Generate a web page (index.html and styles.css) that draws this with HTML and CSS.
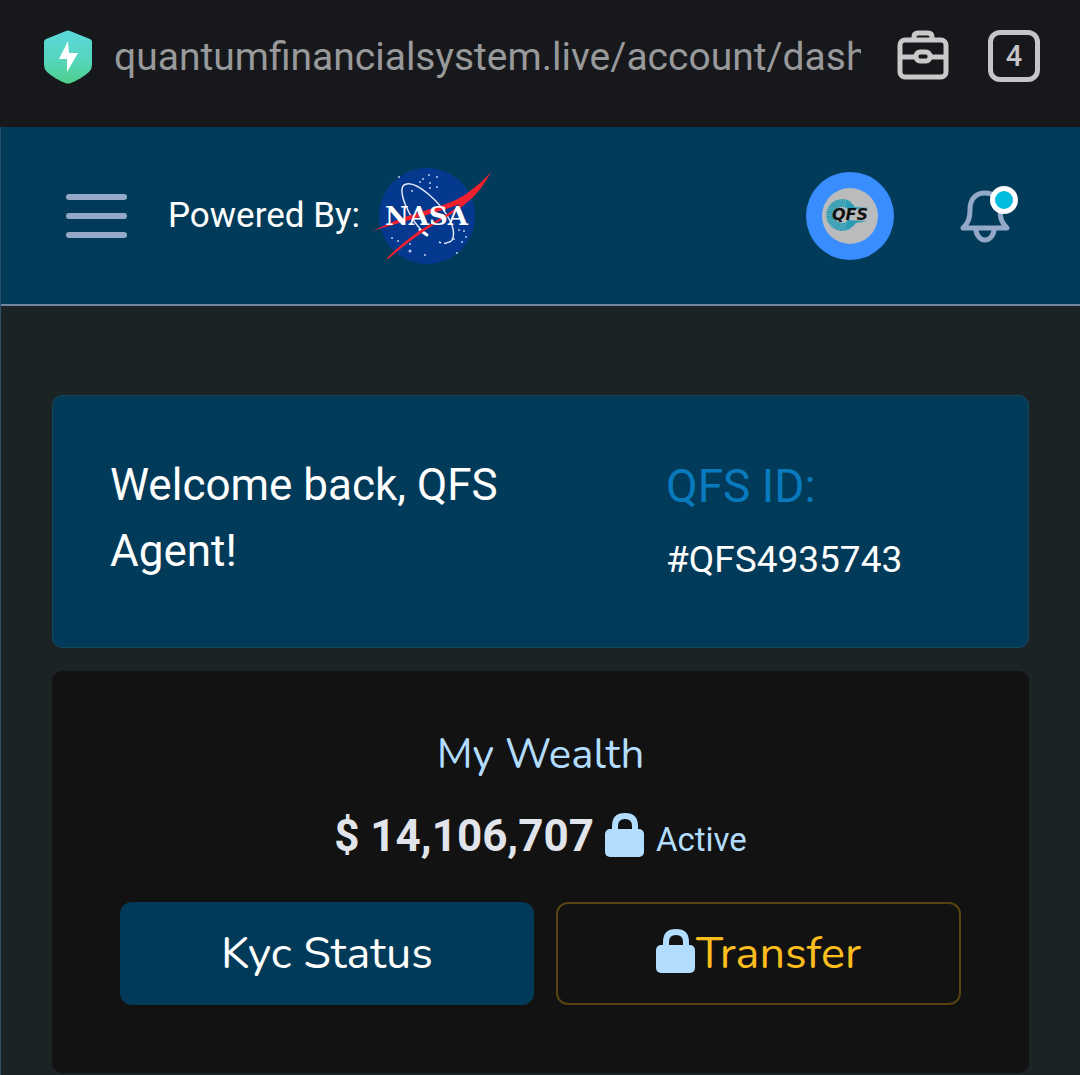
FILE: index.html
```html
<!DOCTYPE html>
<html lang="en">
  <head>
    <meta charset="UTF-8">
    <meta name="viewport" content="width=device-width, initial-scale=1">
    <title>Dashboard</title>
    <link rel="stylesheet" href="styles.css">
  </head>
  <body>
    <div class="browser-bar">
      <svg class="shield" viewBox="0 0 48 54" aria-hidden="true">
        <defs>
          <linearGradient id="shieldFill" x1="0" y1="0" x2="0" y2="1">
            <stop offset="0" stop-color="#5bd8dc"/>
            <stop offset="0.55" stop-color="#55d5bd"/>
            <stop offset="1" stop-color="#4fd08b"/>
          </linearGradient>
        </defs>
        <path fill="url(#shieldFill)" d="M22 1q2-1 4 0l20 8q2 1 2 3v23q0 4-3 7-8 7-18 11-3 1-6 0Q11 49 3 42q-3-3-3-7V12q0-2 2-3z"/>
        <path fill="#fff" d="M24 11L15 29h8v13l11-19h-9z"/>
      </svg>
      <input class="address" type="text" aria-label="Address" value="quantumfinancialsystem.live/account/dash" readonly>
      <button class="bar-button" type="button" aria-label="Toolbox">
        <svg viewBox="0 0 52 52" fill="none" stroke="#c9c9ca" stroke-width="5" aria-hidden="true">
          <path d="M17 10V7q0-4 4-4h10q4 0 4 4v3"/>
          <rect x="3" y="10" width="46" height="37" rx="5"/>
          <path d="M5 27h15M33 27h14"/>
          <rect x="19" y="22" width="14" height="9" rx="4"/>
        </svg>
      </button>
      <button class="tab-count" type="button" aria-label="Open tabs">4</button>
    </div>

    <div class="page">
      <header class="header">
        <button class="menu" type="button" aria-label="Menu">
          <span></span>
          <span></span>
          <span></span>
        </button>
        <div class="powered">Powered By:</div>
        <svg class="nasa" viewBox="0 -2 120 100" aria-label="NASA">
          <circle cx="55" cy="48" r="48" fill="#05398f"/>
          <g fill="#b9cbea">
            <circle cx="51" cy="11" r="1"/><circle cx="57" cy="7" r="1"/><circle cx="65" cy="9" r="1"/>
            <circle cx="48" cy="14" r="1"/><circle cx="58" cy="15" r="1"/><circle cx="65" cy="19" r="1"/>
            <circle cx="58" cy="20" r="1"/><circle cx="40" cy="23" r="1"/><circle cx="27" cy="9" r="1"/>
            <circle cx="26" cy="73" r="1"/><circle cx="20" cy="70" r="1"/><circle cx="38" cy="83" r="1.5"/>
            <circle cx="38" cy="76" r="1"/><circle cx="87" cy="62" r="1"/><circle cx="92" cy="63" r="1"/>
            <circle cx="82" cy="71" r="1"/><circle cx="90" cy="74" r="1"/><circle cx="85" cy="85" r="1"/>
            <circle cx="53" cy="87" r="1"/><circle cx="94" cy="69" r="1"/>
          </g>
          <path fill="none" stroke="#dfe8f7" stroke-width="1.5" d="M54 67C36 50 24 20 33 16.500c10-5 36 17 46 38 5 13 2 20-4 20"/>
          <path fill="none" stroke="#dfe8f7" stroke-width="1.500" stroke-dasharray="3 3" d="M75 75q-4 1-8-1"/>
          <path stroke="#fff" stroke-width="3" stroke-linecap="round" d="M48 62l7 5"/>
          <path fill="#f2202e" d="M0 63C16 56 28 50 41 46.500 52 43 62 40 71 37c12-4 19-8 27-14 8-6 15-12 21-19-6 11-12 20-21 28-6 5-12 10-20 15C67 53 58 59 48 66 36 74 26 83 16 91l-1-1C25 80 36 71 47 63c11-7 22-13 31-19 5-3 8-6 10-8-5 2-11 4-17 6-10 3-20 6-30 9C27 55 14 59 0 63z"/>
          <text class="nasa-text" x="13" y="57">NASA</text>
        </svg>

        <button class="avatar" type="button" aria-label="Account">
          <svg viewBox="0 0 56 56" aria-hidden="true">
            <circle cx="28" cy="28" r="28" fill="#b9bbbd"/>
            <path fill="none" stroke="#2a9db5" stroke-width="8" d="M27 17a12 12 0 1 0 0 20"/>
            <path fill="none" stroke="#8fb4bd" stroke-width="8" stroke-dasharray=".5 1.500" d="M27 17a12 12 0 1 0 0 20"/>
            <path fill="#2a9db5" d="M24 13q6 1 9 6l14 1-22 2zM24 41q7-1 10-6l11-2-20-1z"/>
            <text class="avatar-text" x="10" y="32">QFS</text>
          </svg>
        </button>
        <button class="bell" type="button" aria-label="Notifications">
          <svg viewBox="0 0 50 54" fill="none" stroke="#94a9c8" stroke-width="5" stroke-linejoin="round" aria-hidden="true">
            <path d="M3 39C8 34 10 30 10 20 10 10 16 4 25 4s15 6 15 16c0 10 2 14 7 19z"/>
            <path d="M16 40c0 6 4 11 9 11s9-5 9-11"/>
          </svg>
          <span class="badge"></span>
        </button>
      </header>

      <main class="content">
        <section class="card welcome">
          <h1>Welcome back, QFS Agent!</h1>
          <div class="account-id">
            <h2>QFS ID:</h2>
            <p>#QFS4935743</p>
          </div>
        </section>

        <section class="card wealth">
          <h2>My Wealth</h2>
          <div class="balance">
            <strong>$ 14,106,707</strong>
            <svg class="lock" viewBox="0 0 40 46" aria-hidden="true">
              <rect x="0" y="16" width="39" height="28" rx="5" fill="#b2ddff"/>
              <path d="M10 18v-5q0-10 10-10t10 10v5" fill="none" stroke="#b2ddff" stroke-width="6"/>
            </svg>
            <span>Active</span>
          </div>
          <div class="actions">
            <button class="btn btn-primary" type="button">Kyc Status</button>
            <button class="btn btn-outline" type="button">
              <svg class="lock" viewBox="0 0 40 46" aria-hidden="true">
                <rect x="0" y="16" width="39" height="28" rx="5" fill="#b2ddff"/>
                <path d="M10 18v-5q0-10 10-10t10 10v5" fill="none" stroke="#b2ddff" stroke-width="6"/>
              </svg>Transfer
            </button>
          </div>
        </section>
      </main>
    </div>
  </body>
</html>
```
FILE: styles.css
```css
* {
  box-sizing: border-box;
}

body {
  background-color: #1b2324;
  color: #fff;
  font-family: Roboto, sans-serif;
  margin: 0;
}

h1, h2, p {
  font-weight: 400;
  margin: 0;
}

button {
  background: none;
  border: none;
  color: inherit;
  cursor: pointer;
  font-family: inherit;
  padding: 0;
}

svg {
  display: block;
}

/* browser bar */
.browser-bar {
  align-items: flex-start;
  background-color: #17181c;
  display: flex;
  padding: 30px 40px 43px 44px;
}

.shield {
  flex: none;
  height: 54px;
  width: 48px;
}

.address {
  background: none;
  border: none;
  color: #98999a;
  flex: 1;
  font-family: Roboto, sans-serif;
  font-size: 39px;
  height: 54px;
  margin: 0 36px 0 22px;
  min-width: 0;
  outline: none;
  padding: 0;
}

.bar-button {
  flex: none;
  height: 52px;
  width: 52px;
}

.tab-count {
  border: 5px solid #c5c5c7;
  border-radius: 12px;
  color: #c5c5c7;
  flex: none;
  font-size: 29px;
  font-weight: 500;
  height: 52px;
  line-height: 40px;
  margin-left: 39px;
  width: 52px;
}

/* page header */
.page {
  border-left: 1px solid #27516a;
}

.header {
  align-items: center;
  background-color: #023b59;
  border-bottom: 2px solid #7187a3;
  display: flex;
  height: 179px;
  padding: 0 70px 0 65px;
}

.menu {
  display: flex;
  flex: none;
  flex-direction: column;
  gap: 13px;
  width: 61px;
}

.menu span {
  background-color: #94a9c8;
  border-radius: 3px;
  height: 6px;
}

.powered {
  font-size: 35px;
  margin-left: 41px;
  white-space: nowrap;
}

.nasa {
  flex: none;
  height: 100px;
  margin-left: 12px;
  width: 120px;
}

.nasa-text {
  fill: #fff;
  font-family: "DejaVu Serif", serif;
  font-size: 26px;
  font-weight: 700;
}

.avatar {
  background-color: #3a8dff;
  border-radius: 50%;
  flex: none;
  height: 88px;
  margin-left: auto;
  padding: 16px;
  width: 88px;
}

.avatar-text {
  fill: #111;
  font-family: "DejaVu Sans", sans-serif;
  font-size: 16px;
  font-style: italic;
  font-weight: 700;
}

.bell {
  flex: none;
  margin-left: 66px;
  position: relative;
  width: 50px;
}

.badge {
  background-color: #00bcdc;
  border: 5px solid #fff;
  border-radius: 50%;
  height: 28px;
  position: absolute;
  right: -8px;
  top: -3px;
  width: 28px;
}

/* cards */
.content {
  display: flex;
  flex-direction: column;
  gap: 23px;
  padding: 89px 51px 2px;
}

.card {
  border-radius: 10px;
}

.welcome {
  background-color: #023b59;
  border: 1px solid #174659;
  display: grid;
  gap: 84px;
  grid-template-columns: 54fr 35fr;
  padding: 56px 56px 47px 57px;
}

.welcome h1 {
  font-size: 44px;
  line-height: 66px;
}

.account-id h2 {
  color: #087abd;
  font-size: 46px;
  line-height: 68px;
}

.account-id p {
  font-size: 37px;
  line-height: 80px;
}

.wealth {
  background-color: #121212;
  padding: 54px 68px 68px;
  text-align: center;
}

.wealth h2 {
  color: #b2ddff;
  font-family: Nunito, Lato, sans-serif;
  font-size: 42px;
  line-height: 60px;
}

.balance {
  align-items: center;
  color: #b2ddff;
  display: flex;
  font-size: 33px;
  gap: 11px;
  height: 64px;
  justify-content: center;
  margin: 19px 0 34px;
}

.balance strong {
  color: #e1e4ea;
  font-size: 44px;
}

.balance span {
  padding-top: 6px;
}

.lock {
  flex: none;
  height: 46px;
  width: 40px;
}

.actions {
  display: grid;
  gap: 22px;
  grid-template-columns: 46fr 45fr;
}

.btn {
  align-items: center;
  border-radius: 12px;
  display: flex;
  font-family: Nunito, Lato, sans-serif;
  font-size: 45px;
  height: 103px;
  justify-content: center;
}

.btn .lock {
  margin-bottom: 4px;
}

.btn-primary {
  background-color: #023b59;
}

.btn-outline {
  border: 2px solid #584410;
  color: #fcbd1e;
}
```
